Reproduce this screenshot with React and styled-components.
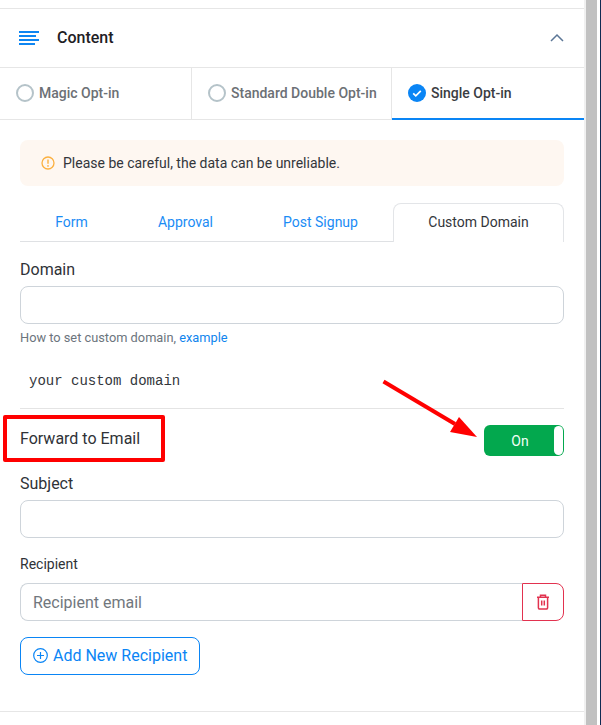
import styled, { createGlobalStyle } from 'styled-components';

const GlobalStyle = createGlobalStyle`
  html, body {
    margin: 0;
    padding: 0;
    background: #ffffff;
  }
  body {
    font-family: Roboto, "Liberation Sans", sans-serif;
    color: #2b2e33;
  }
  * {
    box-sizing: border-box;
  }
`;

const Page = styled.div`
  position: relative;
  width: 601px;
  height: 725px;
  overflow: hidden;
  display: flex;
  background: #ffffff;
`;

const Panel = styled.div`
  flex: 0 0 586px;
  padding-top: 8px;
  border-right: 2px solid #f0f0f0;
`;

const Scrollbar = styled.div`
  flex: 0 0 11px;
  height: 725px;
  background-color: #c1c1c1;
`;

const Edge = styled.div`
  flex: 0 0 4px;
  height: 725px;
  border-right: 1px solid #0f2a52;
`;

const SectionHead = styled.div`
  height: 60px;
  width: 584px;
  border-top: 1px solid #e6e6e6;
  border-bottom: 1px solid #e6e6e6;
  padding: 0 20px 2px 19px;
  display: flex;
  align-items: center;
  gap: 18px;
  h2 {
    margin: 0;
    flex: 1;
    font-size: 16px;
    font-weight: 500;
    color: #1e2024;
  }
`;

const OptTabs = styled.div`
  height: 52px;
  width: 584px;
  display: flex;
  border-bottom: 1px solid #e6e6e6;
`;

const OptTab = styled.div`
  width: ${({ $w }) => $w}px;
  height: ${({ $active }) => ($active ? '52px' : '51px')};
  display: flex;
  align-items: center;
  gap: 5px;
  padding-left: 16px;
  padding-bottom: ${({ $active }) => ($active ? '0' : '2px')};
  font-size: 14px;
  font-weight: 500;
  color: ${({ $active }) => ($active ? '#3a3d42' : '#6c7075')};
  border-right: ${({ $last }) => ($last ? 'none' : '1px solid #e6e6e6')};
  border-bottom: ${({ $active }) => ($active ? '2px solid #0a85f5' : 'none')};
`;

const Radio = styled.span`
  width: 18px;
  height: 18px;
  border-radius: 50%;
  border: 2px solid #b5c3c9;
`;

const Body = styled.div`
  padding: 20px 20px 0 20px;
  border-bottom: 1px solid #e6e6e6;
  height: 592px;
  width: 584px;
`;

const Alert = styled.div`
  height: 46px;
  border-radius: 8px;
  background: #fef7f1;
  padding-left: 21px;
  display: flex;
  align-items: center;
  gap: 8px;
  font-size: 14px;
  color: #33363b;
`;

const SubTabs = styled.div`
  display: flex;
  height: 39px;
  margin-top: 17px;
`;

const SubTab = styled.div`
  flex: ${({ $w }) => `0 0 ${$w}px`};
  display: flex;
  align-items: center;
  justify-content: center;
  padding-bottom: ${({ $active }) => ($active ? '3px' : '0')};
  font-size: 14px;
  color: ${({ $active }) => ($active ? '#33363b' : '#1a8cf5')};
  border: ${({ $active }) => ($active ? '1px solid #e3e5e8' : 'none')};
  border-bottom: ${({ $active }) => ($active ? 'none' : '1px solid #dfe1e4')};
  border-radius: ${({ $active }) => ($active ? '8px 8px 0 0' : '0')};
`;

const Label = styled.div`
  font-size: ${({ $small }) => ($small ? '14px' : '16px')};
  line-height: 20px;
  color: #2f3237;
  margin-top: ${({ $mt }) => $mt}px;
  margin-bottom: ${({ $mb }) => $mb}px;
`;

const Input = styled.input`
  display: block;
  width: 100%;
  height: 38px;
  border: 1px solid #ced4da;
  border-radius: 8px;
  background: #ffffff;
  padding: 0 12px;
  outline: none;
  font-family: inherit;
  font-size: 16px;
  &::placeholder {
    color: #71777d;
    opacity: 1;
  }
`;

const Help = styled.div`
  margin-top: 6px;
  font-size: 12.8px;
  line-height: 16px;
  color: #6c757d;
  a {
    color: #0f85ee;
    text-decoration: none;
  }
`;

const Code = styled.div`
  font-family: "Liberation Mono", monospace;
  font-size: 14px;
  line-height: 16px;
  color: #33363b;
  padding-left: 9px;
  margin-top: 27px;
  padding-bottom: 19px;
  border-bottom: 1px solid #e4e4e4;
`;

const ForwardRow = styled.div`
  display: flex;
  align-items: center;
  justify-content: space-between;
  height: 31px;
  margin-top: 16px;
  font-size: 16px;
  color: #2f3237;
`;

const ForwardLabel = styled.span`
  padding-bottom: 4px;
`;

const Toggle = styled.div`
  position: relative;
  width: 80px;
  height: 31px;
  padding-right: 8px;
  border-radius: 6px;
  background: #03a84e;
  color: #f2fff7;
  font-size: 14px;
  display: flex;
  align-items: center;
  justify-content: center;
  &::after {
    content: '';
    position: absolute;
    right: 1px;
    top: 1px;
    width: 9px;
    height: 29px;
    border-radius: 6px;
    background: #ffffff;
  }
`;

const RecipientRow = styled.div`
  display: flex;
  ${Input} {
    flex: 1;
    border-right: none;
    border-radius: 8px 0 0 8px;
  }
`;

const DeleteBtn = styled.div`
  flex: 0 0 42px;
  height: 38px;
  border: 1px solid #e2324f;
  border-radius: 0 8px 8px 0;
  display: flex;
  align-items: center;
  justify-content: center;
`;

const AddBtn = styled.div`
  display: inline-flex;
  align-items: center;
  gap: 5px;
  height: 38px;
  margin-top: 16px;
  padding: 0 12px 2px 12px;
  border: 1px solid #0a85f5;
  border-radius: 8px;
  color: #0a85f5;
  font-size: 16px;
`;

const Highlight = styled.div`
  position: absolute;
  left: 3px;
  top: 415px;
  width: 162px;
  height: 47px;
  border: 4px solid #ff0000;
  border-radius: 2px;
`;

const ArrowOverlay = styled.svg`
  position: absolute;
  left: 375px;
  top: 372px;
`;

const LinesSvg = styled.svg`
  margin-top: 2px;
`;

const LinesIcon = () => (
  <LinesSvg width="20" height="14" viewBox="0 0 20 14" fill="none" stroke="#0f86f2" strokeWidth="2">
    <path d="M0 1h20M0 5h17M0 9h20M0 13h16" />
  </LinesSvg>
);

const ChevronIcon = () => (
  <svg width="14" height="9" viewBox="0 0 14 9" fill="none" stroke="#5b7696" strokeWidth="1.5">
    <path d="M1 8l6-6 6 6" />
  </svg>
);

const CheckCircle = () => (
  <svg width="18" height="18" viewBox="0 0 18 18">
    <circle cx="9" cy="9" r="9" fill="#0a85f5" />
    <path d="M5.2 9.3l2.6 2.5 5-5" fill="none" stroke="#fff" strokeWidth="1.7" />
  </svg>
);

const WarnIcon = () => (
  <svg width="14" height="14" viewBox="0 0 14 14" fill="none">
    <circle cx="7" cy="7" r="6" stroke="#fbb040" strokeWidth="1.3" />
    <path d="M7 3.5v4.2" stroke="#fbb040" strokeWidth="1.4" />
    <circle cx="7" cy="9.9" r=".85" fill="#fbb040" />
  </svg>
);

const TrashIcon = () => (
  <svg width="14" height="16" viewBox="0 0 14 16" fill="none" stroke="#e2324f" strokeWidth="1.5">
    <path d="M1 3.2h12M4.5 3V1.2h5V3M2.4 3.2v10.6a1.2 1.2 0 0 0 1.2 1.2h6.8a1.2 1.2 0 0 0 1.2-1.2V3.2M5.7 6.5v5M8.3 6.5v5" />
  </svg>
);

const PlusCircle = () => (
  <svg width="15" height="15" viewBox="0 0 15 15" fill="none" stroke="#0a85f5" strokeWidth="1.2">
    <circle cx="7.5" cy="7.5" r="6.8" />
    <path d="M7.5 4v7M4 7.5h7" />
  </svg>
);

const App = () => {
  return (
    <Page>
      <GlobalStyle />
      <Panel>
        <SectionHead>
          <LinesIcon />
          <h2>Content</h2>
          <ChevronIcon />
        </SectionHead>
        <OptTabs>
          <OptTab $w={192}>
            <Radio />
            Magic Opt-in
          </OptTab>
          <OptTab $w={200}>
            <Radio />
            Standard Double Opt-in
          </OptTab>
          <OptTab $w={192} $active $last>
            <CheckCircle />
            Single Opt-in
          </OptTab>
        </OptTabs>
        <Body>
          <Alert>
            <WarnIcon />
            Please be careful, the data can be unreliable.
          </Alert>
          <SubTabs>
            <SubTab $w={103}>Form</SubTab>
            <SubTab $w={125}>Approval</SubTab>
            <SubTab $w={145}>Post Signup</SubTab>
            <SubTab $w={171} $active>Custom Domain</SubTab>
          </SubTabs>
          <Label $mt={18} $mb={6}>Domain</Label>
          <Input />
          <Help>
            How to set custom domain, <a href="#example">example</a>
          </Help>
          <Code>your custom domain</Code>
          <ForwardRow>
            <ForwardLabel>Forward to Email</ForwardLabel>
            <Toggle>On</Toggle>
          </ForwardRow>
          <Label $mt={18} $mb={6}>Subject</Label>
          <Input />
          <Label $small $mt={16} $mb={9}>Recipient</Label>
          <RecipientRow>
            <Input placeholder="Recipient email" />
            <DeleteBtn>
              <TrashIcon />
            </DeleteBtn>
          </RecipientRow>
          <AddBtn>
            <PlusCircle />
            Add New Recipient
          </AddBtn>
        </Body>
      </Panel>
      <Scrollbar />
      <Edge />
      <Highlight />
      <ArrowOverlay width="110" height="70" viewBox="0 0 110 70">
        <path d="M8.5 9.5L80 52" stroke="#ff0000" strokeWidth="4" />
        <path d="M102 65L75 60L84 45Z" fill="#ff0000" />
      </ArrowOverlay>
    </Page>
  );
};

export default App;
